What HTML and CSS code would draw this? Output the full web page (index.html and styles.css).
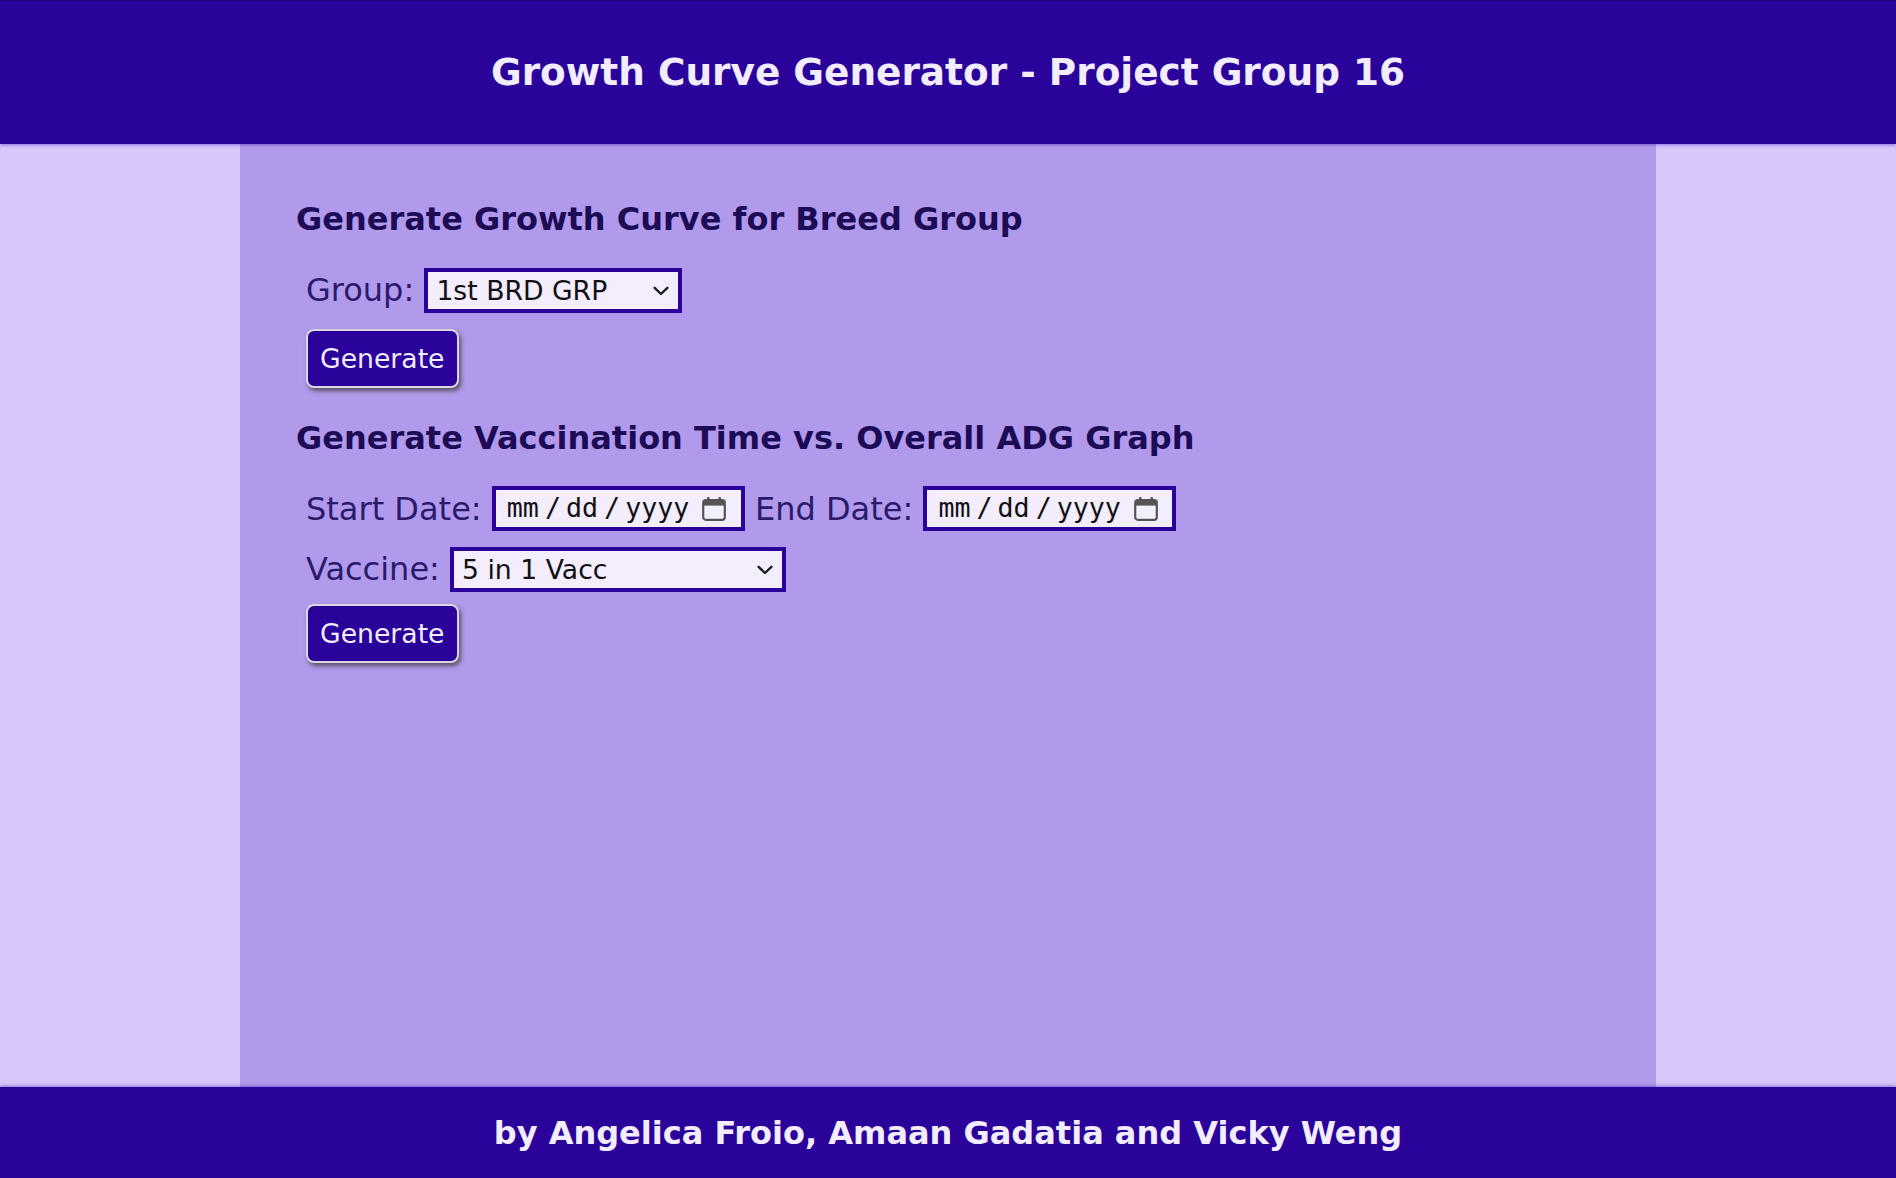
FILE: index.html
```html
<!DOCTYPE html>
<html lang="en">
<head>
<meta charset="utf-8">
<title>Growth Curve Generator - Project Group 16</title>
<link rel="stylesheet" href="styles.css">
</head>
<body>
<header class="site-header">
  <h1 class="site-title">Growth Curve Generator - Project Group 16</h1>
</header>
<main class="main">
  <section class="panel">
    <h2 class="section-title">Generate Growth Curve for Breed Group</h2>
    <form class="form">
      <div class="row">
        <label class="label" for="group">Group:</label> <span class="select-wrap"><select id="group" class="select select-group">
          <option>1st BRD GRP</option>
          <option>2nd BRD GRP</option>
        </select><svg class="chevron" width="16" height="10" viewBox="0 0 16 10" aria-hidden="true"><polyline points="1.6,1.8 8,8 14.4,1.8" fill="none" stroke="#1d1d1d" stroke-width="2.4" stroke-linecap="round" stroke-linejoin="round"/></svg></span>
      </div>
      <div class="row row-btn">
        <button type="button" class="btn">Generate</button>
      </div>
    </form>

    <h2 class="section-title">Generate Vaccination Time vs. Overall ADG Graph</h2>
    <form class="form">
      <div class="row">
        <label class="label">Start Date:</label> <span class="date-field" role="textbox" aria-label="Start Date"><span class="dpart">mm</span><span class="dsep">/</span><span class="dpart">dd</span><span class="dsep">/</span><span class="dpart">yyyy</span><svg class="cal" width="26" height="26" viewBox="0 0 26 26" aria-hidden="true"><rect x="2.2" y="4.2" width="21.6" height="19.6" rx="2.6" fill="none" stroke="#555" stroke-width="2.2"/><rect x="2.2" y="4.2" width="21.6" height="5.4" fill="#555"/><rect x="6" y="1" width="2.6" height="5" rx="1" fill="#555"/><rect x="17.4" y="1" width="2.6" height="5" rx="1" fill="#555"/></svg></span> <label class="label">End Date:</label> <span class="date-field" role="textbox" aria-label="End Date"><span class="dpart">mm</span><span class="dsep">/</span><span class="dpart">dd</span><span class="dsep">/</span><span class="dpart">yyyy</span><svg class="cal" width="26" height="26" viewBox="0 0 26 26" aria-hidden="true"><rect x="2.2" y="4.2" width="21.6" height="19.6" rx="2.6" fill="none" stroke="#555" stroke-width="2.2"/><rect x="2.2" y="4.2" width="21.6" height="5.4" fill="#555"/><rect x="6" y="1" width="2.6" height="5" rx="1" fill="#555"/><rect x="17.4" y="1" width="2.6" height="5" rx="1" fill="#555"/></svg></span>
      </div>
      <div class="row row-vacc">
        <label class="label" for="vacc">Vaccine:</label> <span class="select-wrap"><select id="vacc" class="select select-vacc">
          <option>5 in 1 Vacc</option>
          <option>Other Vacc</option>
        </select><svg class="chevron" width="16" height="10" viewBox="0 0 16 10" aria-hidden="true"><polyline points="1.6,1.8 8,8 14.4,1.8" fill="none" stroke="#1d1d1d" stroke-width="2.4" stroke-linecap="round" stroke-linejoin="round"/></svg></span>
      </div>
      <div class="row row-btn2">
        <button type="button" class="btn">Generate</button>
      </div>
    </form>
  </section>
</main>
<footer class="site-footer">
  <p class="credits">by Angelica Froio, Amaan Gadatia and Vicky Weng</p>
</footer>
</body>
</html>
```
FILE: styles.css
```css
html, body {
  margin: 0;
  padding: 0;
}
body {
  min-height: 100vh;
  display: flex;
  flex-direction: column;
  background: #d6c6fa;
  font-family: "DejaVu Sans", Verdana, sans-serif;
}
.site-header {
  height: 144px;
  background: #2a039b;
  display: flex;
  align-items: center;
  justify-content: center;
  box-shadow: 0 1px 3px rgba(90, 50, 200, 0.6);
  position: relative;
  z-index: 1;
  box-sizing: border-box;
  border-top: 1px solid #1e0278;
}
.site-title {
  margin: 0;
  font-size: 37.44px;
  font-weight: bold;
  color: #f2ecff;
  line-height: 1.16;
}
.main {
  flex: 1;
  display: flex;
  justify-content: center;
}
.panel {
  width: 1416px;
  box-sizing: border-box;
  background: #b19aeb;
  padding: 57px 56px 40px;
}
.section-title {
  margin: 0;
  font-size: 32px;
  font-weight: bold;
  line-height: 37px;
  color: #1c0b55;
}
.form {
  padding-left: 10px;
  margin: 28px 0 32px;
}
.row {
  display: block;
  line-height: 44px;
  font-size: 32px;
  white-space: nowrap;
}
.label {
  font-size: 32px;
  color: #2a1a6c;
  vertical-align: middle;
}
.select-wrap {
  position: relative;
  display: inline-block;
  vertical-align: middle;
  line-height: 0;
}
.select {
  -webkit-appearance: none;
  appearance: none;
  font-family: "DejaVu Sans", Verdana, sans-serif;
  font-size: 26.67px;
  height: 45px;
  border: 4px solid #2a039b;
  background: #f3edfd;
  color: #111;
  padding: 0 30px 0 8px;
  box-sizing: border-box;
  border-radius: 0;
  margin: 0;
}
.select-group {
  width: 258px;
}
.select-vacc {
  width: 336px;
}
.chevron {
  position: absolute;
  right: 13px;
  top: 18px;
  pointer-events: none;
}
.date-field {
  display: inline-flex;
  align-items: center;
  vertical-align: middle;
  width: 253px;
  height: 45px;
  box-sizing: border-box;
  border: 4px solid #2a039b;
  background: #f3edfd;
  padding: 0 0 0 11px;
  font-family: "DejaVu Sans Mono", monospace;
  font-size: 26.67px;
  line-height: 1;
  color: #111;
}
.dsep {
  margin: 0 5px 0 6px;
}
.cal {
  margin-left: 12px;
  flex: none;
}
.row-btn {
  margin-top: 16px;
  line-height: normal;
}
.row-vacc {
  margin-top: 14px;
}
.row-btn2 {
  margin-top: 12px;
  line-height: normal;
}
.btn {
  font-family: "DejaVu Sans", Verdana, sans-serif;
  font-size: 26.67px;
  color: #f2ecff;
  background: #2a039b;
  border: 2px solid #dcd6e2;
  border-radius: 8px;
  padding: 12px 12px;
  box-shadow: 2px 3px 4px rgba(60, 60, 60, 0.75);
  cursor: pointer;
}
.site-footer {
  height: 91px;
  background: #2a039b;
  display: flex;
  align-items: center;
  justify-content: center;
  box-shadow: 0 -1px 3px rgba(90, 50, 200, 0.6);
}
.credits {
  margin: 0;
  font-size: 32px;
  font-weight: bold;
  color: #f2ecff;
}
```
